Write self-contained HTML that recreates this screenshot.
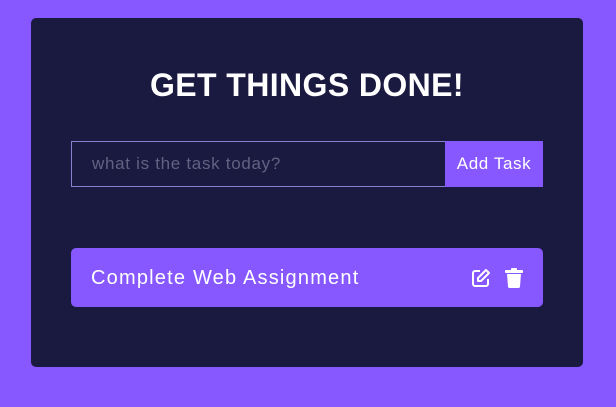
<!DOCTYPE html>
<html><head><style>
body{margin:0;width:616px;height:407px;background:#8758ff;font-family:"Liberation Sans",sans-serif;position:relative;overflow:hidden}
.c{position:absolute;left:31px;top:18px;width:552px;height:349px;background:#1a1a40;border-radius:5px}
h1{position:absolute;left:0;width:552px;top:49px;margin:0;text-align:center;color:#fff;font-size:32px;font-weight:bold;letter-spacing:0.4px}
.in{position:absolute;left:40px;top:123px;height:44px;border:1px solid #8a7fd0;color:#5f6380;font-size:17px;letter-spacing:0.7px;line-height:44px;padding-left:20px;width:354px}
.btn{position:absolute;left:414px;top:123px;width:98px;height:46px;background:#8758ff;color:#fff;font-size:17px;letter-spacing:0.6px;line-height:46px;text-align:center}
.t{position:absolute;left:40px;top:230px;width:472px;height:59px;background:#8758ff;border-radius:5px;color:#fff;font-size:20px;letter-spacing:1.2px;line-height:60px}
.t span{position:absolute;left:20px}
svg{position:absolute;top:20px}
</style></head><body>
<div class="c">
<h1>GET THINGS DONE!</h1>
<div class="in">what is the task today?</div>
<div class="btn">Add Task</div>
<div class="t"><span>Complete Web Assignment</span>
<svg style="left:400px" width="20" height="20" viewBox="0 0 20 20" fill="none" stroke="#fff" stroke-width="2" stroke-linejoin="round"><path d="M9 3H4a2 2 0 0 0-2 2v11a2 2 0 0 0 2 2h11a2 2 0 0 0 2-2v-5"/><path d="M15 2l3 3-8 8H7v-3z"/></svg>
<svg style="left:434px" width="18" height="20" viewBox="0 0 18 20" fill="#fff"><rect x="0" y="2" width="18" height="3" rx="1"/><rect x="6" y="0" width="6" height="3" rx="1"/><path d="M2 6h14l-1 12.5a1.6 1.6 0 0 1-1.6 1.5H4.6A1.6 1.6 0 0 1 3 18.5z"/></svg>
</div>
</div>
</body></html>
